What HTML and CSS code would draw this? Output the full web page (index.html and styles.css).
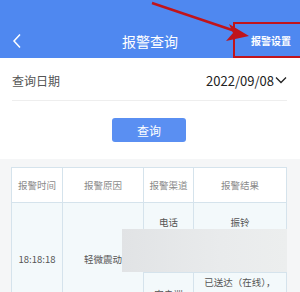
FILE: index.html
```html
<!DOCTYPE html>
<html>
<head>
    <title>报警查询</title>
    <link rel="stylesheet" href="styles.css">
</head>
<body>
    <header class="topbar">
        <svg class="back" width="10" height="16" viewBox="0 0 10 16">
            <polyline points="8,1.5 2,8 8,14.5" fill="none" stroke="#fff" stroke-width="1.5"/>
        </svg>
        <h1 class="title">报警查询</h1>
        <a class="setting">报警设置</a>
        <div class="mark-box"></div>
        <svg class="mark-arrow" width="300" height="60" viewBox="0 0 300 60">
            <line x1="152" y1="3" x2="238" y2="32" stroke="#c0141b" stroke-width="2.4"/>
            <polygon points="249,36 229,24 233,33 226,41" fill="#c0141b"/>
        </svg>
    </header>

    <section class="query">
        <div class="date-row">
            <span class="label">查询日期</span>
            <span class="date">2022/09/08
                <svg width="12" height="8" viewBox="0 0 12 8">
                    <polyline points="1,1.5 6,6.5 11,1.5" fill="none" stroke="#222" stroke-width="1.3"/>
                </svg>
            </span>
        </div>
        <div class="btn-wrap">
            <button class="query-btn">查询</button>
        </div>
    </section>

    <section class="result">
        <table class="alarm-table">
            <colgroup>
                <col class="c-time">
                <col class="c-reason">
                <col class="c-way">
                <col class="c-res">
            </colgroup>
            <tr class="head">
                <th>报警时间</th>
                <th>报警原因</th>
                <th>报警渠道</th>
                <th>报警结果</th>
            </tr>
            <tr class="sub1">
                <td rowspan="3">18:18:18</td>
                <td rowspan="3">轻微震动</td>
                <td>电话</td>
                <td>振铃</td>
            </tr>
            <tr class="sub2">
                <td></td>
                <td></td>
            </tr>
            <tr class="sub3">
                <td>客户端</td>
                <td class="top">已送达（在线），<br>已查看</td>
            </tr>
        </table>
        <div class="mosaic"></div>
    </section>
</body>
</html>
```

FILE: styles.css
```css
body { margin: 0; font-family: "Noto Sans CJK SC", "Noto Sans", sans-serif; background: #fff; overflow: hidden; height: 292px; }

.topbar { position: relative; height: 58px; background: #4f88f0; }
.back { position: absolute; left: 12px; top: 33px; }
.title { margin: 0; padding-top: 32px; text-align: center; font-size: 14px; font-weight: normal; color: #fff; line-height: 18px; }
.setting { position: absolute; left: 251px; top: 33px; font-size: 10px; line-height: 16px; color: #fff; font-weight: bold; }
.mark-box { position: absolute; left: 233px; top: 22px; width: 70px; height: 32px; border: 2px solid #c0141b; }
.mark-arrow { position: absolute; left: 0; top: 0; }

.query { padding: 0 13px 0 12px; }
.date-row { display: flex; justify-content: space-between; align-items: center; height: 43px; padding-top: 2px; box-sizing: border-box; border-bottom: 1px solid #eee; }
.label { font-size: 12px; color: #555; }
.date { font-size: 13px; color: #222; display: flex; align-items: center; gap: 1px; }
.btn-wrap { display: flex; justify-content: center; padding: 17px 0; }
.query-btn { width: 74px; height: 24px; border: none; border-radius: 3px; background: #5a8ff2; color: #fff; font-family: inherit; font-size: 12px; padding: 0; margin-left: -1px; }

.result { position: relative; background: #f5f6f7; padding: 8px 14px 0 11px; height: 200px; }
.alarm-table { width: 275px; border-collapse: collapse; table-layout: fixed; font-size: 9.5px; text-align: center; }
.alarm-table th, .alarm-table td { border: 1px solid #d5e3ec; padding: 0; }
.alarm-table th { height: 34px; font-weight: normal; color: #8a8a8a; background: #fff; }
.alarm-table td { background: #f3f9fb; color: #555; line-height: 16px; }
.alarm-table td.top { vertical-align: top; padding-top: 1px; }
.c-time { width: 51px; }
.c-reason { width: 81px; }
.c-way { width: 50px; }
.c-res { width: 93px; }
.sub1 td { height: 37px; }
.sub2 td { height: 31px; }
.sub3 td { height: 41px; }
.mosaic { position: absolute; left: 122px; top: 70px; width: 165px; height: 43px; background: linear-gradient(90deg, #e1e3e5, #e9ebec 60%, #eceeee); }
```
